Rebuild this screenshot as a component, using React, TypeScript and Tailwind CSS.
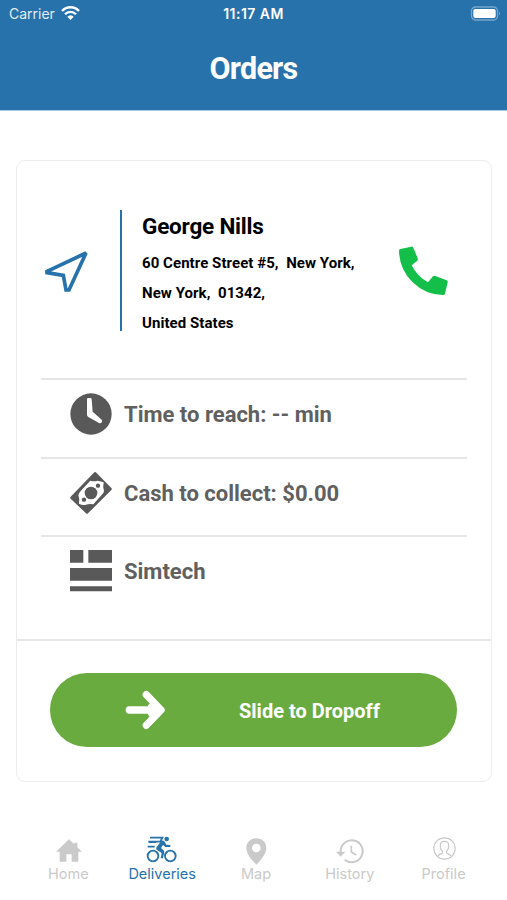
import type { ReactNode } from "react";

interface InfoRowProps {
    icon: ReactNode;
    label: string;
    className: string;
}

function InfoRow({ icon, label, className }: InfoRowProps) {
    return (
        <div className={`flex gap-3 border-t-2 border-[#e6e6e6] pl-[29px] ${className}`}>
            <div className="mt-[13px] h-[42px] w-[42px] shrink-0">{icon}</div>
            <span className="mt-[21px] text-[22px] leading-[28px] font-bold text-[#606060]">{label}</span>
        </div>
    );
}

interface TabProps {
    label: string;
    icon: ReactNode;
    active?: boolean;
}

function Tab({ label, icon, active }: TabProps) {
    return (
        <button className={`flex flex-col items-center ${active ? "text-[#2772ab]" : "text-[#cacaca]"}`}>
            <div className="flex h-[32px] items-start">{icon}</div>
            <span className="font-[Inter,sans-serif] text-[14.5px] leading-[18px] whitespace-nowrap">{label}</span>
        </button>
    );
}

function StatusBar() {
    return (
        <div className="grid h-[28px] grid-cols-3 items-center font-[Inter,sans-serif] text-[14px] leading-[18px]">
            <div className="flex items-center gap-[6px] pl-[9px]">
                <span className="text-[#e2ecf5]">Carrier</span>
                <svg className="-mt-[2px]" width="19" height="15" viewBox="0 0 57 45" fill="none" stroke="white" strokeWidth="7">
                    <path d="M3 15C17 0 40 0 54 15" />
                    <path d="M12 25C21 15 36 15 45 25" />
                    <path d="M19 32Q28.500 23 38 32L28.500 42Z" fill="white" stroke="none" />
                </svg>
            </div>
            <span className="text-center font-semibold tracking-[0.45px]">11:17 AM</span>
            <div className="flex justify-end pr-[6px]">
                <svg className="-mt-[2px]" width="31" height="15" viewBox="0 0 31 15">
                    <rect x="1.500" y="1" width="26" height="13" rx="4" fill="none" stroke="#76a6cc" strokeWidth="1.300" />
                    <rect x="3.300" y="3" width="22.400" height="9" rx="2" fill="white" />
                    <path d="M29 5.500q2 2 0 4z" fill="#76a6cc" />
                </svg>
            </div>
        </div>
    );
}

const navigateIcon = (
    <svg width="46" height="44" viewBox="0 0 138 132" fill="none" stroke="#2772ab" strokeWidth="11" strokeLinejoin="miter" strokeMiterlimit="1.500">
        <path d="M9 64L126 9L75 120L66 120L58 76L9 68Z" />
    </svg>
);

const phoneIcon = (
    <svg width="50" height="50" viewBox="0 0 150 150" fill="#13bf49">
        <path d="M7 9L40 2Q44 1 46 5L59 37Q61 41 58 44L41 58Q57 91 90 109L105 91Q108 88 112 90L146 103Q150 105 149 109L141 143Q140 147 135 147Q83 147 44 109Q4 70 3 14Q3 10 7 9Z" />
    </svg>
);

const clockIcon = (
    <svg width="42" height="42" viewBox="0 0 126 126">
        <circle cx="63" cy="63" r="62" fill="#595959" />
        <path d="M51 19Q51 15 55 15H61Q65 15 65 19L68 56L95 80Q98 83 95 88Q92 92 87 90L55 72Q51 69 51 65Z" fill="white" />
    </svg>
);

const cashIcon = (
    <svg width="42" height="42" viewBox="0 0 126 126">
        <path d="M73 1Q76 -1 79 2L124 48Q127 51 124 54L54 124Q51 127 48 124L2 80Q-1 77 2 74Z" fill="#595959" />
        <path d="M61 26Q72 29 83 26Q92 28 101 31Q98 44 102 57Q102 63 94 70L70 97Q58 95 45 99Q35 100 27 95Q30 82 25 70Q25 65 32 57Z" fill="white" />
        <circle cx="63" cy="63" r="19" fill="#595959" />
        <circle cx="84" cy="41" r="6.500" fill="#595959" />
        <circle cx="42" cy="83" r="6.500" fill="#595959" />
    </svg>
);

const companyIcon = (
    <svg width="42" height="42" viewBox="0 0 126 126" fill="#595959">
        <path d="M0 0H40V38H0ZM55 0H126V38H55ZM0 54H126V92H0ZM0 109H126V124H0Z" />
    </svg>
);

const arrowIcon = (
    <svg width="42" height="40" viewBox="0 0 126 120" fill="none" stroke="white" strokeWidth="22" strokeLinecap="round" strokeLinejoin="round">
        <path d="M13 60H106M64 14L108 60L64 106M80 50L90 60L80 70" />
    </svg>
);

const homeIcon = (
    <svg className="mt-[6px] ml-px" width="26" height="23" viewBox="0 0 78 69" fill="currentColor">
        <path d="M39 1L55 16V11H64V25L78 38H67V68H47V46H31V68H11V38H0Z" />
    </svg>
);

const bikeIcon = (
    <svg className="mt-[2px]" width="32" height="29" viewBox="0 0 96 87" fill="none" stroke="currentColor" strokeWidth="5.500">
        <circle cx="21" cy="63" r="16" />
        <circle cx="73" cy="63" r="16" />
        <circle cx="62" cy="12" r="7" fill="currentColor" stroke="none" />
        <path d="M12 8H49L43 20H7M5 35H26M8 21H30" />
        <path d="M46 18Q50 14 55 19L61 29L73 30V36H58L51 30L45 39L54 47Q56 50 54 55L51 70H44L47 54L32 44Q29 40 32 36Z" fill="currentColor" stroke="none" />
    </svg>
);

const pinIcon = (
    <svg className="mt-[5px] ml-px" width="21" height="27" viewBox="0 0 63 81" fill="currentColor">
        <path fillRule="evenodd" d="M31 1C48 1 61 13 61 30C61 49 42 69 31 80C20 69 1 49 1 30C1 13 14 1 31 1ZM31 17A13 13 0 1 0 31 43A13 13 0 1 0 31 17Z" />
    </svg>
);

const historyIcon = (
    <svg className="mt-[6px]" width="28" height="25" viewBox="0 0 84 75" fill="none" stroke="currentColor" strokeWidth="6">
        <path d="M14 42V36A33 33 0 1 1 26 62" />
        <path d="M0 38H28L14 53Z" fill="currentColor" stroke="none" />
        <path d="M46 20V39L61 48" strokeWidth="5" />
    </svg>
);

const profileIcon = (
    <svg className="mt-[4px] ml-px" width="23" height="23" viewBox="0 0 69 69" fill="none" stroke="currentColor" strokeWidth="3.500">
        <circle cx="34.500" cy="34.500" r="32" />
        <path d="M14 58Q17 52 27 49Q31 46 27 42Q21 36 22 25Q22 13 34.500 13Q47 13 47 25Q48 36 42 42Q38 46 42 49Q52 52 55 58" />
    </svg>
);

export default function App() {
    return (
        <div className="flex h-[900px] w-[507px] flex-col bg-white font-[Roboto,sans-serif]">
            <header className="h-[111px] border-b border-[#a9c9e1] bg-[#2772ab] text-white">
                <StatusBar />
                <h1 className="mt-[22px] text-center text-[30.5px] leading-[38px] font-bold tracking-[-0.75px]">Orders</h1>
            </header>

            <main className="mx-4 mt-[49px] flex h-[622px] w-[476px] flex-col rounded-[9px] border-[1.5px] border-[#ededed]">
                <section className="flex h-[217px] pt-[49px] pl-[27px]">
                    <div className="mt-[40px] h-[44px] w-[46px]">{navigateIcon}</div>
                    <div className="ml-[30px] h-[121px] w-[2px] bg-[#2772ab]" />
                    <div className="ml-[20px] w-[256px] font-bold whitespace-pre text-black">
                        <h2 className="mt-[2px] text-[22.5px] leading-[28px] tracking-[-0.2px]">George Nills</h2>
                        <p className="mt-[8px] text-[15px] leading-[30px] tracking-[0.06px]">
                            {"60 Centre Street #5,  New York,\nNew York,  01342,\nUnited States"}
                        </p>
                    </div>
                    <div className="mt-[36px]">{phoneIcon}</div>
                </section>
                <section className="mx-6 h-[261px]">
                    <InfoRow icon={clockIcon} label="Time to reach: -- min" className="h-[79px]" />
                    <InfoRow icon={cashIcon} label="Cash to collect: $0.00" className="h-[78px]" />
                    <InfoRow icon={companyIcon} label="Simtech" className="h-[104px]" />
                </section>
                <section className="border-t-2 border-[#e6e6e6] px-[33px] pt-[32px]">
                    <button className="flex h-[74px] w-[407px] items-center rounded-full bg-[#6aab40] pl-[75px] text-white">
                        {arrowIcon}
                        <span className="mt-[2px] ml-[72px] text-[20px] leading-[26px] font-bold">Slide to Dropoff</span>
                    </button>
                </section>
            </main>

            <nav className="mt-[51px] grid grid-cols-[repeat(5,93.8px)] pl-[21.5px]">
                <Tab label="Home" icon={homeIcon} />
                <Tab label="Deliveries" icon={bikeIcon} active />
                <Tab label="Map" icon={pinIcon} />
                <Tab label="History" icon={historyIcon} />
                <Tab label="Profile" icon={profileIcon} />
            </nav>
        </div>
    );
}
